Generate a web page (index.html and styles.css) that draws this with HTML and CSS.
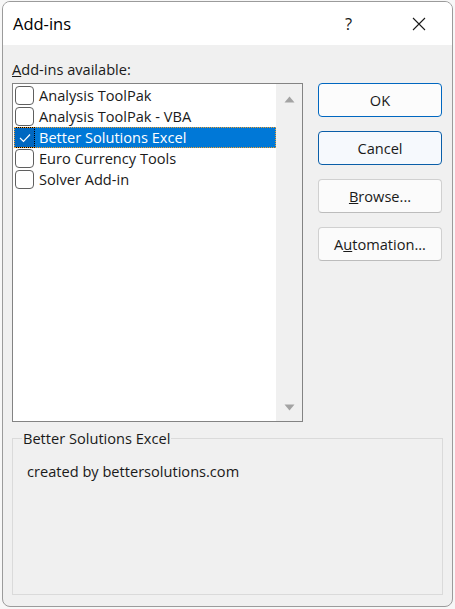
FILE: index.html
```html
<!DOCTYPE html>
<html>
<head>
<meta charset="utf-8">
<link rel="stylesheet" href="styles.css">
</head>
<body>
<div class="window">
  <div class="titlebar">
    <span class="title">Add-ins</span>
    <span class="help">?</span>
    <svg class="close" width="14" height="14" viewBox="0 0 14 14"><path d="M1 1 L13 13 M13 1 L1 13" stroke="#1a1a1a" stroke-width="1.1" fill="none"/></svg>
  </div>
  <div class="content">
    <div class="main">
      <div class="left">
        <div class="label"><u>A</u>dd-ins available:</div>
        <div class="listbox">
          <div class="items">
            <div class="item"><span class="cb"></span><span class="txt">Analysis ToolPak</span></div>
            <div class="item"><span class="cb"></span><span class="txt">Analysis ToolPak - VBA</span></div>
            <div class="item selected"><span class="cb checked"><svg width="12" height="10" viewBox="0 0 12 10"><path d="M1 5 L4.5 8.5 L11 1.5" stroke="#fff" stroke-width="1.2" fill="none"/></svg></span><span class="txt">Better Solutions Excel</span></div>
            <div class="item"><span class="cb"></span><span class="txt">Euro Currency Tools</span></div>
            <div class="item"><span class="cb"></span><span class="txt">Solver Add-in</span></div>
          </div>
          <div class="scrollbar">
            <svg width="11" height="7" viewBox="0 0 11 7"><path d="M5.5 0.5 L10.5 6.5 L0.5 6.5 Z" fill="#a3a3a3"/></svg>
            <svg width="11" height="7" viewBox="0 0 11 7"><path d="M0.5 0.5 L10.5 0.5 L5.5 6.5 Z" fill="#a3a3a3"/></svg>
          </div>
        </div>
      </div>
      <div class="buttons">
        <div class="btn default">OK</div>
        <div class="btn default dark">Cancel</div>
        <div class="btn"><u>B</u>rowse...</div>
        <div class="btn">A<u>u</u>tomation...</div>
      </div>
    </div>
    <fieldset class="group">
      <legend>Better Solutions Excel</legend>
      <div class="desc">created by bettersolutions.com</div>
    </fieldset>
  </div>
</div>
</body>
</html>
```
FILE: styles.css
```css
* { box-sizing: border-box; }
html, body { margin: 0; padding: 0; }
body {
  width: 455px;
  height: 609px;
  background: #f7f7f7;
  font-family: "Segoe UI", "Open Sans", "Noto Sans", sans-serif;
  font-size: 14.6px;
  color: #1a1a1a;
  padding: 1px 2px 0 2px;
}
.window {
  width: 451px;
  height: 606px;
  border: 1px solid #9b9b9b;
  border-radius: 8px;
  overflow: hidden;
  background: #f0f0f0;
  display: flex;
  flex-direction: column;
}
.titlebar {
  height: 43px;
  background: #ffffff;
  display: flex;
  align-items: center;
  padding-left: 10px;
  flex-shrink: 0;
}
.title { font-size: 16.5px; flex: 1; color: #000; }
.help { font-size: 16.5px; margin-right: 60px; color: #1a1a1a; }
.close { margin-right: 26px; }
.content {
  padding: 14px 9px 0 9px;
  display: flex;
  flex-direction: column;
}
.main { display: flex; }
.left { width: 291px; }
.label { height: 20px; line-height: 20px; margin-bottom: 4px; }
.listbox {
  height: 339px;
  border: 1px solid #838383;
  background: #fff;
  display: flex;
}
.items { flex: 1; padding-top: 1px; }
.item {
  height: 21px;
  display: flex;
  align-items: center;
  padding-left: 2px;
}
.cb {
  width: 19px;
  height: 19px;
  border: 1px solid #5f5f5f;
  border-radius: 4px;
  background: #fff;
  margin-right: 5px;
  display: flex;
  align-items: center;
  justify-content: center;
}
.txt { line-height: 21px; white-space: nowrap; }
.item.selected {
  margin-left: 1px;
  padding-left: 1px;
  background: #0078d7;
  color: #fff;
  outline: 1px dotted #f0a030;
  outline-offset: -1px;
}
.cb.checked {
  background: #0067c0;
  border: 1px dotted #000;
  border-radius: 0;
  width: 21px;
  height: 21px;
  margin-left: -1px;
  margin-right: 4px;
}
.scrollbar {
  width: 26px;
  background: #f0f0f0;
  display: flex;
  flex-direction: column;
  justify-content: space-between;
  align-items: center;
  padding: 12px 0 10px 0;
}
.buttons {
  margin-left: 15px;
  padding-top: 24px;
  display: flex;
  flex-direction: column;
  gap: 14px;
}
.btn {
  width: 124px;
  height: 34px;
  border: 1px solid #d0d0d0;
  border-bottom-color: #bcbcbc;
  border-radius: 4px;
  background: #fbfbfb;
  display: flex;
  align-items: center;
  justify-content: center;
  color: #1a1a1a;
}
.btn.default {
  border: 1.5px solid #0067c0;
  background: #fcfcfc;
}
.btn.dark {
  border-color: #0a5ea8;
  background: #f6f9fd;
}
.group {
  margin: 7px 0 0 0;
  padding: 14px 10px 0 10px;
  border: 1px solid #dadada;
  height: 166px;
  min-width: 0;
}
.group legend {
  padding: 0 1px;
  margin-left: -1px;
  line-height: 18px;
}
.desc { padding-left: 4px; line-height: 20px; }
```
